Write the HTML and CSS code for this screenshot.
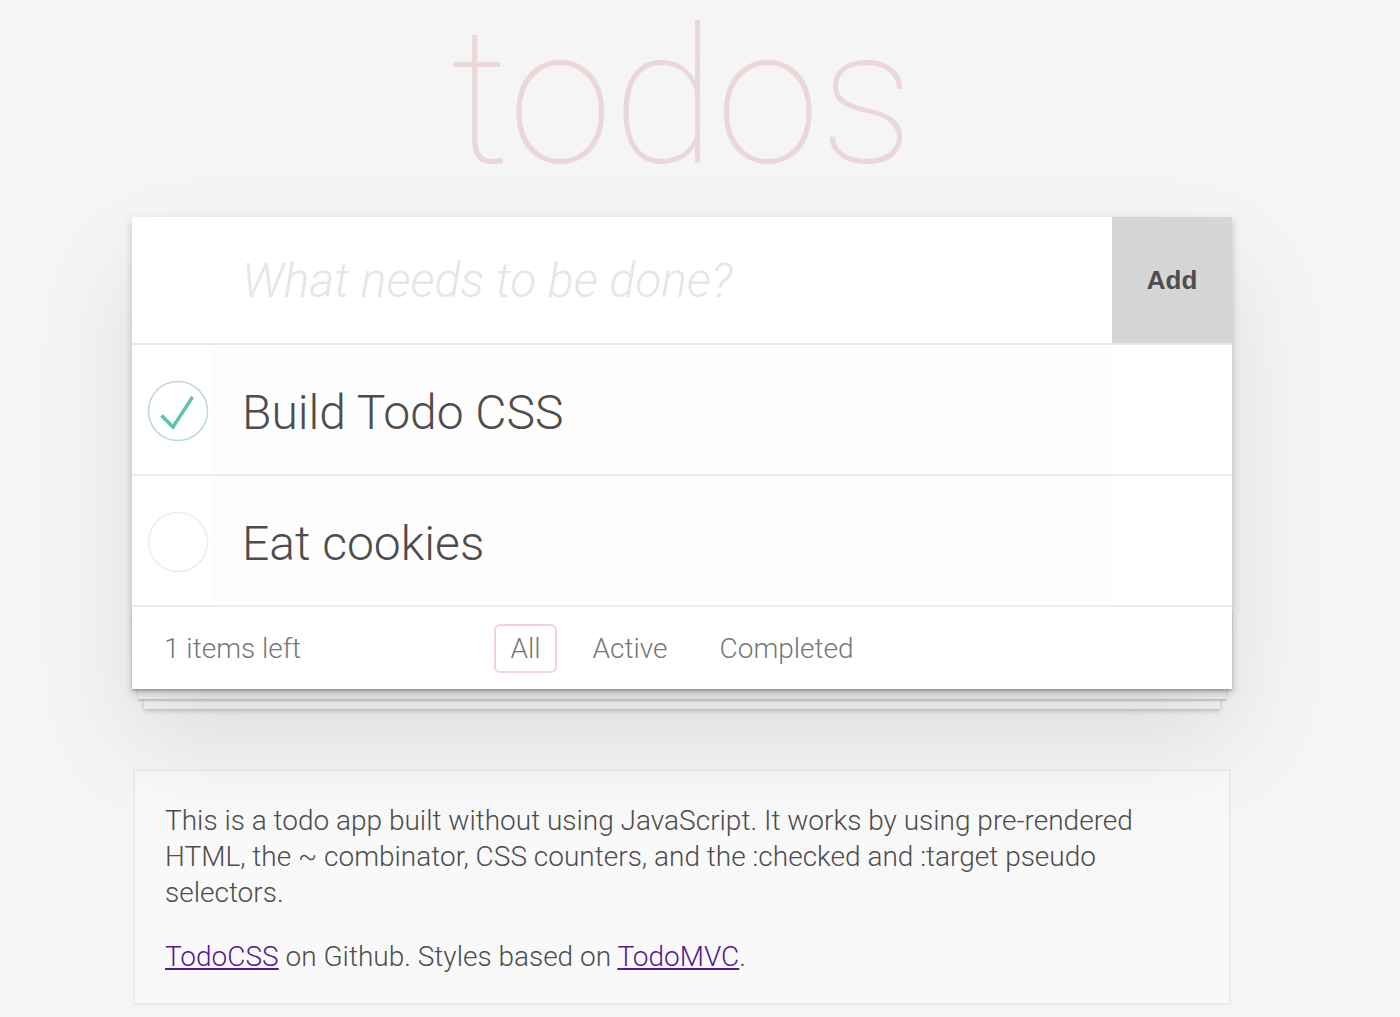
FILE: index.html
```html
<!DOCTYPE html>
<html lang="en">
<head>
<meta charset="utf-8">
<title>TodoCSS</title>
<link rel="stylesheet" href="styles.css">
</head>
<body>
<div class="page">
  <header class="header">
    <h1 class="title">todos</h1>
  </header>
  <section class="todoapp">
    <div class="new-row">
      <input class="new-todo" type="text" placeholder="What needs to be done?">
      <button class="add-btn" type="button">Add</button>
    </div>
    <ul class="todo-list">
      <li class="todo">
        <span class="toggle">
          <svg width="64" height="64" viewBox="0 0 64 64">
            <circle cx="32" cy="32" r="29.5" fill="none" stroke="#bddad5" stroke-width="1.5"/>
            <polyline points="15.5,36.5 27,48 46.5,18" fill="none" stroke="#5dc2af" stroke-width="3.5"/>
          </svg>
        </span>
        <label class="todo-label">Build Todo CSS</label>
      </li>
      <li class="todo">
        <span class="toggle">
          <svg width="64" height="64" viewBox="0 0 64 64">
            <circle cx="32" cy="32" r="29.5" fill="none" stroke="#ededed" stroke-width="1.5"/>
          </svg>
        </span>
        <label class="todo-label">Eat cookies</label>
      </li>
    </ul>
    <footer class="footer">
      <span class="count">1 items left</span>
      <ul class="filters">
        <li><a class="filter selected" href="#">All</a></li>
        <li><a class="filter" href="#">Active</a></li>
        <li><a class="filter" href="#">Completed</a></li>
      </ul>
      <span></span>
    </footer>
  </section>
  <section class="info">
    <p>This is a todo app built without using JavaScript. It works by using pre-rendered HTML, the ~ combinator, CSS counters, and the :checked and :target pseudo selectors.</p>
    <p><a class="link" href="#">TodoCSS</a> on Github. Styles based on <a class="link" href="#">TodoMVC</a>.</p>
  </section>
</div>
</body>
</html>
```
FILE: styles.css
```css
html, body {
  margin: 0;
  padding: 0;
}
body {
  background: #f5f5f5;
  font-family: "Roboto", "Liberation Sans", sans-serif;
  font-weight: 300;
  color: #4d4d4d;
}
.page {
  width: 1100px;
  margin-left: 132px;
}
.header {
  display: flow-root;
  height: 217px;
}
.title {
  margin: 0;
  font-size: 189px;
  line-height: 196px;
  font-weight: 100;
  text-align: center;
  color: #ebd7d7;
}
.todoapp {
  position: relative;
  background: #fff;
  box-shadow: 0 4px 8px 0 rgba(0, 0, 0, 0.2), 0 50px 100px 0 rgba(0, 0, 0, 0.1);
}
.new-row {
  display: flex;
  height: 126px;
  border-bottom: 2px solid #e9e9e9;
}
.new-todo {
  flex: 1;
  min-width: 0;
  border: 0;
  outline: none;
  margin: 0;
  padding: 0 0 0 110px;
  font-family: inherit;
  font-size: 48px;
  font-weight: 300;
  color: #4d4d4d;
  background: #fff;
}
.new-todo::placeholder {
  font-style: italic;
  color: #e6e6e6;
}
.add-btn {
  width: 120px;
  border: 0;
  margin: 0;
  padding: 0;
  background: #d6d6d6;
  font-family: "Liberation Sans", sans-serif;
  font-weight: 700;
  font-size: 26px;
  color: #4d4d4d;
}
.todo-list {
  list-style: none;
  margin: 0;
  padding: 0;
}
.todo {
  display: flex;
  align-items: stretch;
  height: 129px;
  border-bottom: 2px solid #ededed;
}
.toggle {
  width: 80px;
  display: flex;
  align-items: center;
  padding-left: 14px;
  padding-top: 3px;
  box-sizing: border-box;
}
.toggle svg {
  display: block;
}
.todo-label {
  flex: 1;
  display: flex;
  align-items: center;
  padding-left: 30px;
  padding-top: 5px;
  margin-right: 120px;
  font-size: 48px;
  font-weight: 300;
  color: #4d4d4d;
  background: #fdfdfd;
}
.footer {
  position: relative;
  display: grid;
  grid-template-columns: 1fr auto 1fr;
  align-items: center;
  height: 82px;
  padding: 0 32px;
  font-size: 28px;
  color: #777;
}
.footer::before {
  content: "";
  position: absolute;
  left: 0;
  right: 0;
  bottom: 0;
  height: 80px;
  overflow: hidden;
  box-shadow: 0 2px 2px rgba(0, 0, 0, 0.2),
    0 16px 0 -6px #f6f6f6,
    0 18px 2px -6px rgba(0, 0, 0, 0.2),
    0 32px 0 -12px #f6f6f6,
    0 34px 4px -12px rgba(0, 0, 0, 0.2);
  z-index: -1;
}
.count {
  position: relative;
}
.filters {
  list-style: none;
  margin: 0;
  padding: 0;
  display: flex;
  gap: 8px;
}
.filter {
  display: block;
  margin: 0 6px;
  padding: 6px 14px;
  border: 2px solid transparent;
  border-radius: 6px;
  color: #777;
  text-decoration: none;
}
.filter.selected {
  border-color: #efd5d5;
}
.info {
  margin-top: 80px;
  margin-left: 1px;
  width: 1098px;
  box-sizing: border-box;
  border: 2px solid #ebebeb;
  background: #f9f9f9;
  padding: 32px 30px 28px;
  font-size: 28px;
  line-height: 36px;
  color: #4d4d4d;
}
.info p {
  margin: 0;
}
.info p + p {
  margin-top: 28px;
}
.link {
  color: #551a8b;
}
```
